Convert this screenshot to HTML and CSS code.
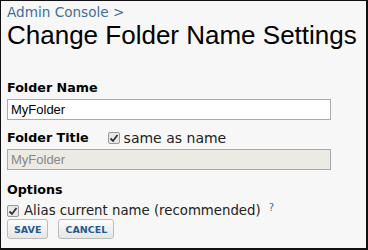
FILE: index.html
```html
<!DOCTYPE html>
<html>
<head>
<meta charset="utf-8">
<link rel="stylesheet" href="styles.css">
</head>
<body>
<div class="frame">
  <div class="crumb"><a href="#">Admin Console</a> &gt;</div>
  <h1 class="title">Change Folder Name Settings</h1>
  <div class="label first">Folder Name</div>
  <input class="field" type="text" value="MyFolder">
  <div class="label row">Folder Title <span class="check-inline"><span class="cb"></span>same as name</span></div>
  <input class="field disabled" type="text" value="MyFolder" disabled>
  <div class="label options">Options</div>
  <div class="option"><span class="cb"></span>Alias current name (recommended)<sup class="help">?</sup></div>
  <div class="buttons">
    <button class="btn">SAVE</button>
    <button class="btn">CANCEL</button>
  </div>
</div>
</body>
</html>
```
FILE: styles.css
```css
html, body { margin: 0; padding: 0; }
body { width: 368px; height: 250px; background: #f7f7f7; overflow: hidden; }
.frame {
  box-sizing: border-box;
  width: 368px; height: 250px;
  border-top: 1px solid #111;
  border-left: 1px solid #111;
  border-right: 2px solid #111;
  border-bottom: 2px solid #111;
  padding: 3px 0 0 6px;
  font-family: "DejaVu Sans", Verdana, sans-serif;
  font-size: 13.3px;
  color: #222;
}
.crumb { font-size: 13.6px; color: #3f6d9c; line-height: 16px; }
.crumb a { color: #3f6d9c; text-decoration: none; }
.title {
  margin: 0;
  font-family: "Liberation Sans", Arial, sans-serif;
  font-weight: normal;
  font-size: 26px;
  line-height: 30px;
  color: #000;
}
.label { font-weight: bold; font-size: 12.7px; line-height: 16px; color: #000; margin-top: 10px; }
.label.first { margin-top: 30px; }
.label.options { margin-top: 12px; }
.label.row { display: flex; align-items: center; }
.check-inline { display: inline-flex; align-items: center; font-weight: normal; font-size: 14px; margin-left: 19px; color: #222; }
.check-inline .cb { margin-right: 4px; }
.cb {
  display: inline-block; box-sizing: border-box;
  width: 12px; height: 12px; border: 1px solid #999; border-radius: 2px;
  background: #e8e8e8 url("data:image/svg+xml;utf8,<svg xmlns='http://www.w3.org/2000/svg' width='12' height='12'><path d='M2.5 6.5 L5 9 L9.5 3' stroke='%23333' stroke-width='1.8' fill='none'/></svg>") no-repeat center;
  margin-right: 5px;
}
.field {
  display: block; box-sizing: border-box;
  width: 324px; height: 21px; margin-top: 3px;
  border: 1px solid #aaa; background: #fff;
  font-family: "Liberation Sans", Arial, sans-serif; font-size: 13px; color: #000;
  padding: 0 3px;
}
.field.disabled { background: #ebebe4; color: #888; }
.option { display: flex; align-items: center; margin-top: 5px; line-height: 16px; }
.help { color: #3f6d9c; font-size: 10px; margin-left: 8px; align-self: flex-start; position: relative; top: -3px; }
.buttons { display: flex; gap: 10px; margin-top: 0; }
.btn {
  box-sizing: border-box; height: 20px; padding: 0 6px;
  border: 1px solid #bbb; border-radius: 3px;
  background: linear-gradient(#fdfdfd, #e6e6e6);
  font-family: "DejaVu Sans", Verdana, sans-serif; font-weight: bold; font-size: 9.5px;
  color: #1f5b92;
}
```
